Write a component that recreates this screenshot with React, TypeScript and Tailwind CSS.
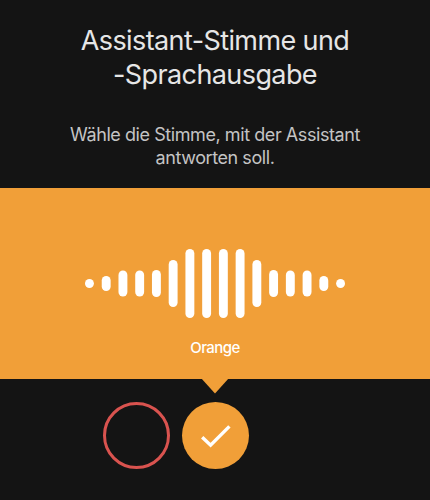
const bars = [9, 15, 26, 26, 27, 47, 69, 69, 69, 69, 47, 27, 26, 26, 15, 9];

function Waveform() {
  return (
    <svg viewBox="0 0 260 70" className="h-[70px] w-[260px]" aria-hidden="true">
      {bars.map((height, i) => (
        <rect
          key={i}
          x={0 + i * 16.74}
          y={35.5 - height / 2}
          width={8.9}
          height={height}
          rx={4.45}
          fill="#fff"
        />
      ))}
    </svg>
  );
}

function CheckIcon() {
  return (
    <svg viewBox="0 0 67 67" className="size-[67px]" fill="none" aria-hidden="true">
      <path d="M20.2 35.2 L28.6 43.2 L47.4 24.4" stroke="#fff" strokeWidth="3.4" />
    </svg>
  );
}

export default function App() {
  return (
    <main className="flex h-[500px] w-[430px] flex-col overflow-hidden bg-[#141414] font-['Inter',sans-serif]">
      <header className="h-[188px] shrink-0 pt-[24px] text-center">
        <h1 className="text-[27px] leading-[34px] tracking-[-0.6px] text-[#e6e6e6]">
          Assistant-Stimme und
          <br />
          -Sprachausgabe
        </h1>
        <p className="mt-[31px] text-[18px] leading-[23px] tracking-[-0.43px] text-[#c4c4c4]">
          Wähle die Stimme, mit der Assistant
          <br />
          antworten soll.
        </p>
      </header>

      <section className="relative flex h-[191px] shrink-0 flex-col items-center bg-[#f19f38] pt-[60px]">
        <Waveform />
        <p className="mt-[20px] text-[15px] leading-[20px] font-medium tracking-[-0.55px] text-white">Orange</p>
        {/* Pointer towards the selected voice */}
        <svg
          viewBox="0 0 28 16"
          className="absolute top-[190px] left-[201px] h-[16px] w-[28px]"
          aria-hidden="true"
        >
          <path d="M0 0 H28 L14 15.5 Z" fill="#f19f38" />
        </svg>
      </section>

      <div className="flex gap-[12px] pt-[23px] pl-[103px]">
        <button aria-label="Rot" className="size-[67px] rounded-full border-3 border-[#d9534f]" />
        <button aria-label="Orange" className="size-[67px] rounded-full bg-[#f19f38]">
          <CheckIcon />
        </button>
      </div>
    </main>
  );
}
